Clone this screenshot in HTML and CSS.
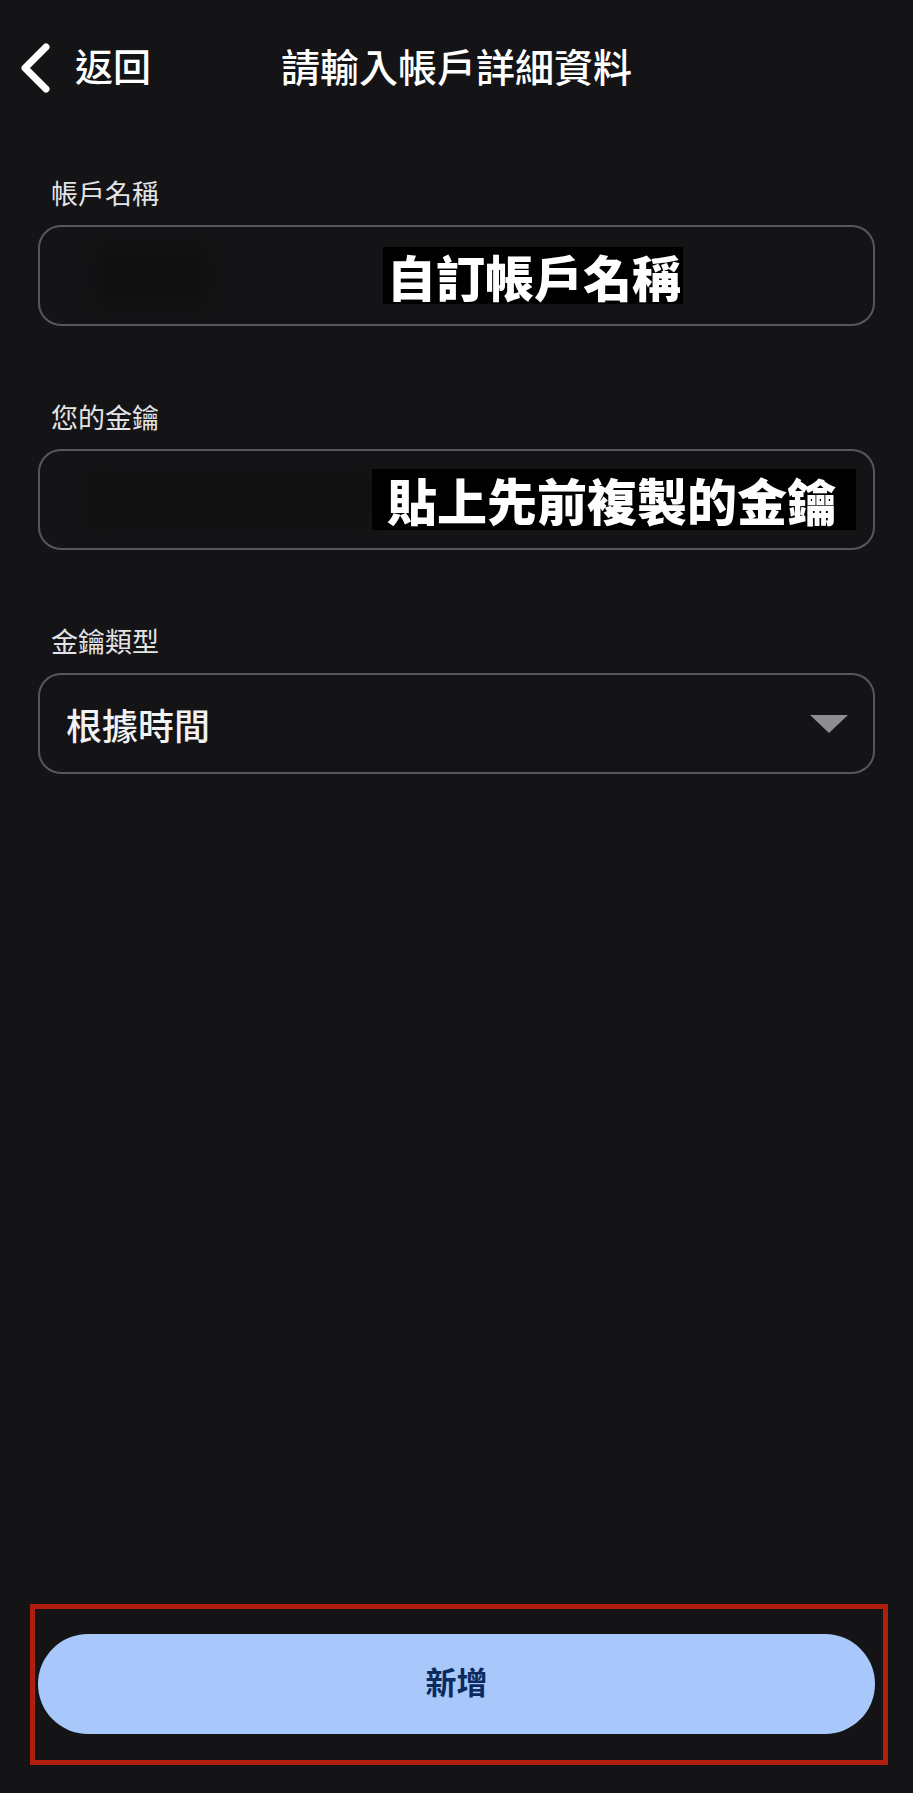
FILE: index.html
```html
<!DOCTYPE html>
<html lang="zh-Hant">
<head>
<meta charset="utf-8">
<title>請輸入帳戶詳細資料</title>
<link rel="stylesheet" href="styles.css">
</head>
<body>
<div class="page">
  <header class="header">
    <div class="back">
      <svg class="chevron" width="32" height="50" viewBox="0 0 32 50" aria-hidden="true">
        <path d="M27 4 L6 25 L27 46" fill="none" stroke="#ffffff" stroke-width="7" stroke-linecap="round" stroke-linejoin="round"/>
      </svg>
      <span class="back-text">返回</span>
    </div>
    <h1 class="title">請輸入帳戶詳細資料</h1>
    <div></div>
  </header>

  <main class="form">
    <section class="field">
      <div class="label">帳戶名稱</div>
      <div class="input input-name">
        <div class="smudge smudge-name"></div>
        <div class="note note-name">自訂帳戶名稱</div>
      </div>
    </section>

    <section class="field">
      <div class="label">您的金鑰</div>
      <div class="input input-key">
        <div class="smudge smudge-key"></div>
        <div class="note note-key">貼上先前複製的金鑰</div>
      </div>
    </section>

    <section class="field">
      <div class="label">金鑰類型</div>
      <div class="input select">
        <span class="select-text">根據時間</span>
        <span class="caret"></span>
      </div>
    </section>
  </main>

  <footer class="footer">
    <div class="highlight">
      <button class="add-btn">新增</button>
    </div>
  </footer>
</div>
</body>
</html>
```

FILE: styles.css
```css
html, body {
  margin: 0;
  padding: 0;
  background: #141416;
}

body {
  font-family: "Noto Sans CJK TC", "Noto Sans", sans-serif;
  color: #ffffff;
}

.page {
  height: 1793px;
  display: flex;
  flex-direction: column;
  box-sizing: border-box;
}

.header {
  height: 136px;
  display: grid;
  grid-template-columns: 1fr auto 1fr;
  align-items: center;
}

.back {
  display: flex;
  align-items: center;
  padding-left: 19px;
}

.chevron {
  display: block;
  flex: none;
}

.back-text {
  margin-left: 24px;
  margin-bottom: 6px;
  font-size: 38px;
  line-height: 46px;
  font-weight: 500;
  color: #ffffff;
}

.title {
  margin: 0 0 6px 0;
  font-size: 39px;
  line-height: 46px;
  font-weight: 500;
  color: #ffffff;
  letter-spacing: 0;
}

.form {
  padding: 41px 38px 0 38px;
  display: flex;
  flex-direction: column;
  gap: 75px;
}

.field {
  display: flex;
  flex-direction: column;
}

.label {
  margin-left: 13px;
  font-size: 27px;
  line-height: 32px;
  color: #e4e4e7;
  margin-bottom: 16px;
}

.input {
  height: 101px;
  box-sizing: border-box;
  border: 2.5px solid #58585c;
  border-radius: 23px;
  display: flex;
  align-items: center;
  overflow: hidden;
}

.smudge {
  flex: none;
  background: #0c0c0d;
  filter: blur(7px);
}

.smudge-name {
  width: 112px;
  height: 58px;
  margin-left: 56px;
  opacity: 0.5;
}

.smudge-key {
  width: 282px;
  height: 52px;
  margin-left: 50px;
  opacity: 0.35;
}

.note {
  flex: none;
  background: #000000;
  color: #ffffff;
  font-family: "Noto Sans CJK TC", serif;
  font-weight: 900;
  white-space: nowrap;
  position: relative;
}

.note-name {
  margin-left: 175px;
  height: 57px;
  line-height: 57px;
  font-size: 49px;
  padding: 0 2px 0 4px;
  width: 300px;
  box-sizing: border-box;
}

.note-key {
  margin-left: 0;
  height: 61px;
  line-height: 61px;
  font-size: 50px;
  padding: 0 17px 0 15px;
  width: 484px;
  box-sizing: border-box;
}

.select {
  justify-content: space-between;
  padding: 0 25px 0 26px;
}

.select-text {
  font-size: 36px;
  line-height: 44px;
  color: #f2f2f4;
  font-weight: 500;
}

.caret {
  width: 0;
  height: 0;
  border-left: 19px solid transparent;
  border-right: 19px solid transparent;
  border-top: 18px solid #8e8e92;
}

.footer {
  margin-top: auto;
  padding: 0 25px 28px 30px;
}

.highlight {
  border: 5px solid #b01e10;
  padding: 25px 8px 26px 3px;
}

.add-btn {
  display: block;
  width: 100%;
  height: 100px;
  border: none;
  border-radius: 50px;
  background: #a8c7fa;
  color: #0b2b5f;
  font-family: "Noto Sans CJK TC", "Noto Sans", sans-serif;
  font-size: 31px;
  font-weight: 700;
  padding: 0 0 7px 0;
}
```
